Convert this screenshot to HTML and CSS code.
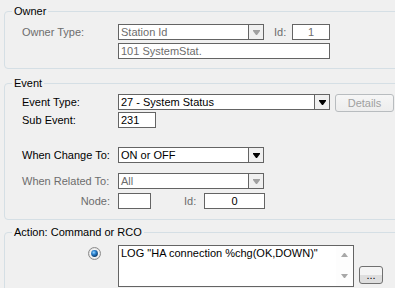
FILE: index.html
```html
<!DOCTYPE html>
<html lang="en">
<head>
    <meta charset="UTF-8">
    <meta name="viewport" content="width=device-width, initial-scale=1.0">
    <title>Event Trigger</title>
    <link rel="stylesheet" href="styles.css">
</head>
<body>
    <div class="panel">
        <fieldset class="group owner">
            <legend>Owner</legend>
            <div class="rows">
                <div class="row">
                    <span class="label dim">Owner Type:</span>
                    <div class="box combo disabled w146">
                        <span class="value">Station Id</span>
                        <span class="drop">
                            <svg width="7" height="5" viewBox="0 0 7 5"><path d="M0 0h7v1L4 5H3L0 1z" fill="#a0a0a0"/></svg>
                        </span>
                    </div>
                    <span class="id-label dim owner-id">Id:</span>
                    <div class="box disabled center w38">1</div>
                </div>
                <div class="row gap3">
                    <span class="label"></span>
                    <div class="box disabled w212">101 SystemStat.</div>
                </div>
            </div>
        </fieldset>

        <fieldset class="group event">
            <legend>Event</legend>
            <div class="rows">
                <div class="row top">
                    <span class="label">Event Type:</span>
                    <div class="box combo w212">
                        <span class="value">27 - System Status</span>
                        <span class="drop">
                            <svg width="7" height="5" viewBox="0 0 7 5"><path d="M0 0h7v1L4 5H3L0 1z" fill="#000"/></svg>
                        </span>
                    </div>
                    <button class="btn details" disabled>Details</button>
                </div>
                <div class="row">
                    <span class="label">Sub Event:</span>
                    <div class="box w38">231</div>
                </div>
                <div class="row gap19">
                    <span class="label">When Change To:</span>
                    <div class="box combo w146">
                        <span class="value">ON or OFF</span>
                        <span class="drop">
                            <svg width="7" height="5" viewBox="0 0 7 5"><path d="M0 0h7v1L4 5H3L0 1z" fill="#000"/></svg>
                        </span>
                    </div>
                </div>
                <div class="row gap10">
                    <span class="label dim">When Related To:</span>
                    <div class="box combo disabled w146">
                        <span class="value">All</span>
                        <span class="drop">
                            <svg width="7" height="5" viewBox="0 0 7 5"><path d="M0 0h7v1L4 5H3L0 1z" fill="#a0a0a0"/></svg>
                        </span>
                    </div>
                </div>
                <div class="row gap4">
                    <span class="label dim right">Node:</span>
                    <div class="box w33"></div>
                    <span class="id-label dim node-id">Id:</span>
                    <div class="box center w61">0</div>
                </div>
            </div>
        </fieldset>

        <fieldset class="group action">
            <legend>Action: Command or RCO</legend>
            <div class="rows">
                <div class="row top">
                    <span class="label radio-cell">
                        <svg width="13" height="13" viewBox="0 0 13 13">
                            <defs>
                                <radialGradient id="dot" cx="0.4" cy="0.35" r="0.65">
                                    <stop offset="0" stop-color="#9ad6ff"/>
                                    <stop offset="0.45" stop-color="#2a82d0"/>
                                    <stop offset="1" stop-color="#0c3b6b"/>
                                </radialGradient>
                            </defs>
                            <circle cx="6.5" cy="6.5" r="6" fill="#e4e4e4" stroke="#8c8c8c"/>
                            <circle cx="6.5" cy="6.5" r="4.6" fill="#f6f6f6"/>
                            <circle cx="6.5" cy="6.5" r="3.4" fill="url(#dot)"/>
                        </svg>
                    </span>
                    <div class="memo">
                        <div class="memo-text">LOG "HA connection %chg(OK,DOWN)"</div>
                        <div class="memo-scroll">
                            <svg width="7" height="4" viewBox="0 0 7 4"><path d="M3 0h1l3 4H0z" fill="#a8a8a8"/></svg>
                            <svg width="7" height="4" viewBox="0 0 7 4"><path d="M0 0h7L4 4H3z" fill="#a8a8a8"/></svg>
                        </div>
                    </div>
                    <button class="btn more">...</button>
                </div>
            </div>
        </fieldset>
    </div>
</body>
</html>
```

FILE: styles.css
```css
body {
    margin: 0;
    background-color: #f0f0f0;
    font-family: 'Liberation Sans', Arial, sans-serif;
    font-size: 11px;
    color: #000;
    overflow: hidden;
}

.panel {
    padding: 5px 0 0 4px;
}

.group {
    width: 400px;
    box-sizing: border-box;
    margin: 0;
    border: 1px solid #d5dfe5;
    border-radius: 4px;
    padding: 6px 0 9px 7px;
}

.group legend {
    padding: 0 2px;
    line-height: 13px;
}

.event {
    margin-top: 8px;
    padding-top: 4px;
    padding-bottom: 10px;
}

.action {
    margin-top: 6px;
    padding-bottom: 10px;
}

.rows {
    padding-left: 10px;
}

.row {
    display: flex;
    align-items: center;
}

.row.top {
    align-items: flex-start;
}

.gap3 { margin-top: 3px; }
.gap4 { margin-top: 4px; }
.gap10 { margin-top: 10px; }
.gap19 { margin-top: 19px; }

.label {
    width: 96px;
    flex: none;
    line-height: 16px;
    white-space: nowrap;
}

.label.right {
    text-align: right;
    padding-right: 8px;
    box-sizing: border-box;
}

.dim {
    color: #6d6d6d;
}

.id-label {
    line-height: 16px;
}

.owner-id {
    margin-left: 10px;
    width: 18px;
}

.node-id {
    margin-left: 33px;
    width: 20px;
}

.box {
    height: 16px;
    box-sizing: border-box;
    border: 1px solid #646464;
    background-color: #fff;
    line-height: 14px;
    padding: 0 2px;
    white-space: nowrap;
    flex: none;
}

.box.disabled {
    color: #6d6d6d;
}

.box.center {
    text-align: center;
}

.w33 { width: 33px; }
.w38 { width: 38px; }
.w61 { width: 61px; }
.w146 { width: 146px; }
.w212 { width: 212px; }

.combo {
    display: flex;
    padding: 0;
}

.combo .value {
    flex: 1;
    padding-left: 2px;
    overflow: hidden;
}

.combo .drop {
    width: 15px;
    box-sizing: border-box;
    border-left: 1px solid #646464;
    background-color: #f0f0f0;
    display: flex;
    align-items: center;
    justify-content: center;
}

.btn {
    font-family: inherit;
    font-size: 11px;
    height: 18px;
    padding: 0;
    border-radius: 3px;
    flex: none;
}

.details {
    margin-left: 5px;
    width: 59px;
    border: 1px solid #b8bcbf;
    background: linear-gradient(#f6f6f6, #ededed);
    color: #a0a0a0;
}

.more {
    margin-left: 5px;
    margin-top: 21px;
    width: 24px;
    border: 1px solid #707070;
    background: linear-gradient(#f4f4f4 50%, #dedede 50%);
    color: #000;
    line-height: 12px;
}

.radio-cell {
    padding: 2px 0 0 66px;
    box-sizing: border-box;
    line-height: 0;
}

.memo {
    width: 236px;
    height: 42px;
    box-sizing: border-box;
    border: 1px solid #646464;
    background-color: #fff;
    display: flex;
    flex: none;
}

.memo-text {
    flex: 1;
    padding: 1px 2px;
    line-height: 13px;
    white-space: nowrap;
    overflow: hidden;
}

.memo-scroll {
    width: 17px;
    display: flex;
    flex-direction: column;
    align-items: center;
    justify-content: space-between;
    padding: 7px 0 8px;
    box-sizing: border-box;
    background-color: #fdfdfd;
}

.memo-scroll svg {
    display: block;
}
```
